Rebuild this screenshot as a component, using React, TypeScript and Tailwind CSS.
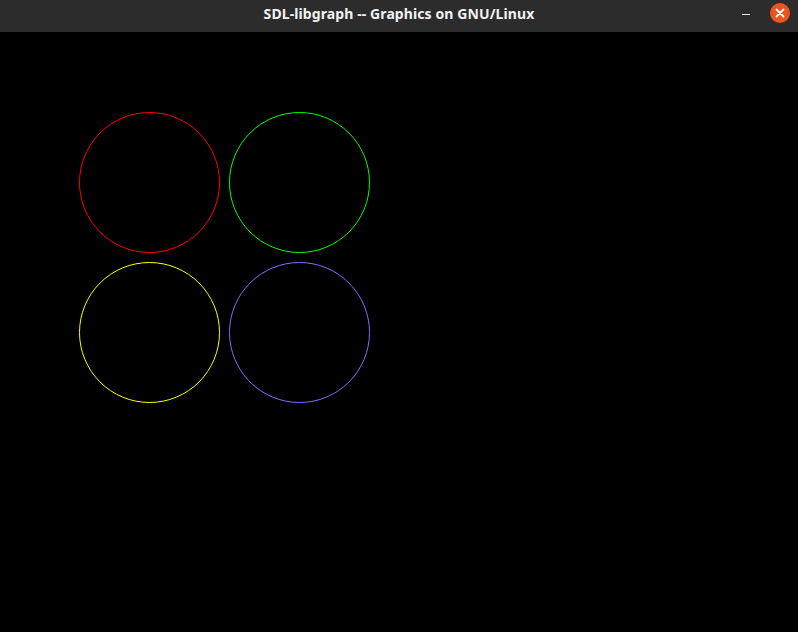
const circles = [
  { cx: 149.5, cy: 150.5, color: "#ff0000" },
  { cx: 299.5, cy: 150.5, color: "#00ff00" },
  { cx: 149.5, cy: 300.5, color: "#ffff00" },
  { cx: 299.5, cy: 300.5, color: "#7f6fff" },
];

export default function App() {
  return (
    <div className="w-[798px] h-[632px] flex flex-col bg-black overflow-hidden">
      <div className="h-8 flex items-center bg-[#2c2c2c] relative shrink-0">
        <div className="flex-1 text-center text-[14px] leading-[20px] pb-[4px] font-bold text-[#f2f2f2] font-['Noto_Sans',sans-serif] tracking-[0.1px]">
          SDL-libgraph -- Graphics on GNU/Linux
        </div>
        <div className="absolute right-[8px] top-[3px] flex items-center gap-[20px]">
          <div className="w-[8px] h-[1.5px] bg-[#e8e8e8] mt-[3px]"></div>
          <div className="w-[20px] h-[20px] rounded-full bg-[#e95420] flex items-center justify-center">
            <svg width="10" height="10" viewBox="0 0 10 10">
              <path d="M1.5 1.5 L8.5 8.5 M8.5 1.5 L1.5 8.5" stroke="#fff" strokeWidth="1.8" strokeLinecap="round" />
            </svg>
          </div>
        </div>
      </div>
      <div className="flex-1">
        <svg width="798" height="600" viewBox="0 0 798 600">
          {circles.map((c, i) => (
            <circle key={i} cx={c.cx} cy={c.cy} r={70} fill="none" stroke={c.color} strokeWidth={1} />
          ))}
        </svg>
      </div>
    </div>
  );
}
